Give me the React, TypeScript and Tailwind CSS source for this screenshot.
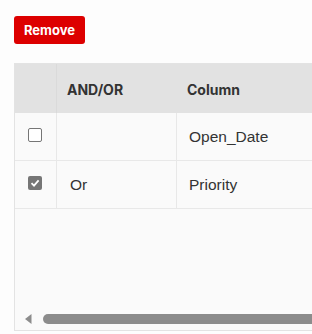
export default function App() {
  const rows = [
    { checked: false, op: "", column: "Open_Date" },
    { checked: true, op: "Or", column: "Priority" },
  ]

  return (
    <div className="w-[312px] h-[334px] overflow-hidden bg-[#fdfdfd] pl-[14px] pt-[16px] font-['Liberation_Sans',Arial,sans-serif]">
      <button className="h-[28px] w-[71px] rounded-[3px] bg-[#dd0000] text-white text-[13px] font-bold font-['Inter',sans-serif] leading-none">
        Remove
      </button>

      {/* Grid */}
      <div className="mt-[19px] w-[340px] h-[268px] border border-[#e3e3e3] bg-[#fafafa] flex flex-col">
        <div className="flex h-[49px] bg-[#e2e2e2] text-[14px] font-bold text-[#333333] font-['Inter',sans-serif]">
          <div className="w-[42px] border-r border-[#dadada]" />
          <div className="w-[120px] flex items-center pl-[10px] pt-[2px]">AND/OR</div>
          <div className="flex-1 flex items-center pl-[10px] pt-[2px]">Column</div>
        </div>
        {rows.map((r, i) => (
          <div key={i} className="flex h-[48px] border-b border-[#e8e8e8] text-[15.5px] text-[#333333]">
            <div className="w-[42px] border-r border-[#e8e8e8] flex items-center pl-[13px] pb-[4px]">
              {r.checked ? (
                <span className="w-[14px] h-[14px] rounded-[2px] bg-[#767676] flex items-center justify-center">
                  <svg width="10" height="10" viewBox="0 0 10 10">
                    <path d="M1.5 5.2 L4 7.6 L8.6 2.4" fill="none" stroke="white" strokeWidth="1.8" />
                  </svg>
                </span>
              ) : (
                <span className="w-[14px] h-[14px] rounded-[2px] border border-[#767676] bg-white" />
              )}
            </div>
            <div className="w-[120px] border-r border-[#e8e8e8] flex items-center pl-[13px]">{r.op}</div>
            <div className="flex-1 flex items-center pl-[12px]">{r.column}</div>
          </div>
        ))}
        <div className="flex-1" />
        {/* horizontal scrollbar */}
        <div className="h-[16px] flex items-center pl-[10px] gap-[11px] mb-[3px]">
          <svg width="7" height="10" viewBox="0 0 7 10">
            <path d="M6.5 0 L6.5 10 L0 5 Z" fill="#8c8c8c" />
          </svg>
          <div className="flex-1 h-[10px] rounded-l-full bg-[#8c8c8c]" />
        </div>
      </div>
    </div>
  )
}
